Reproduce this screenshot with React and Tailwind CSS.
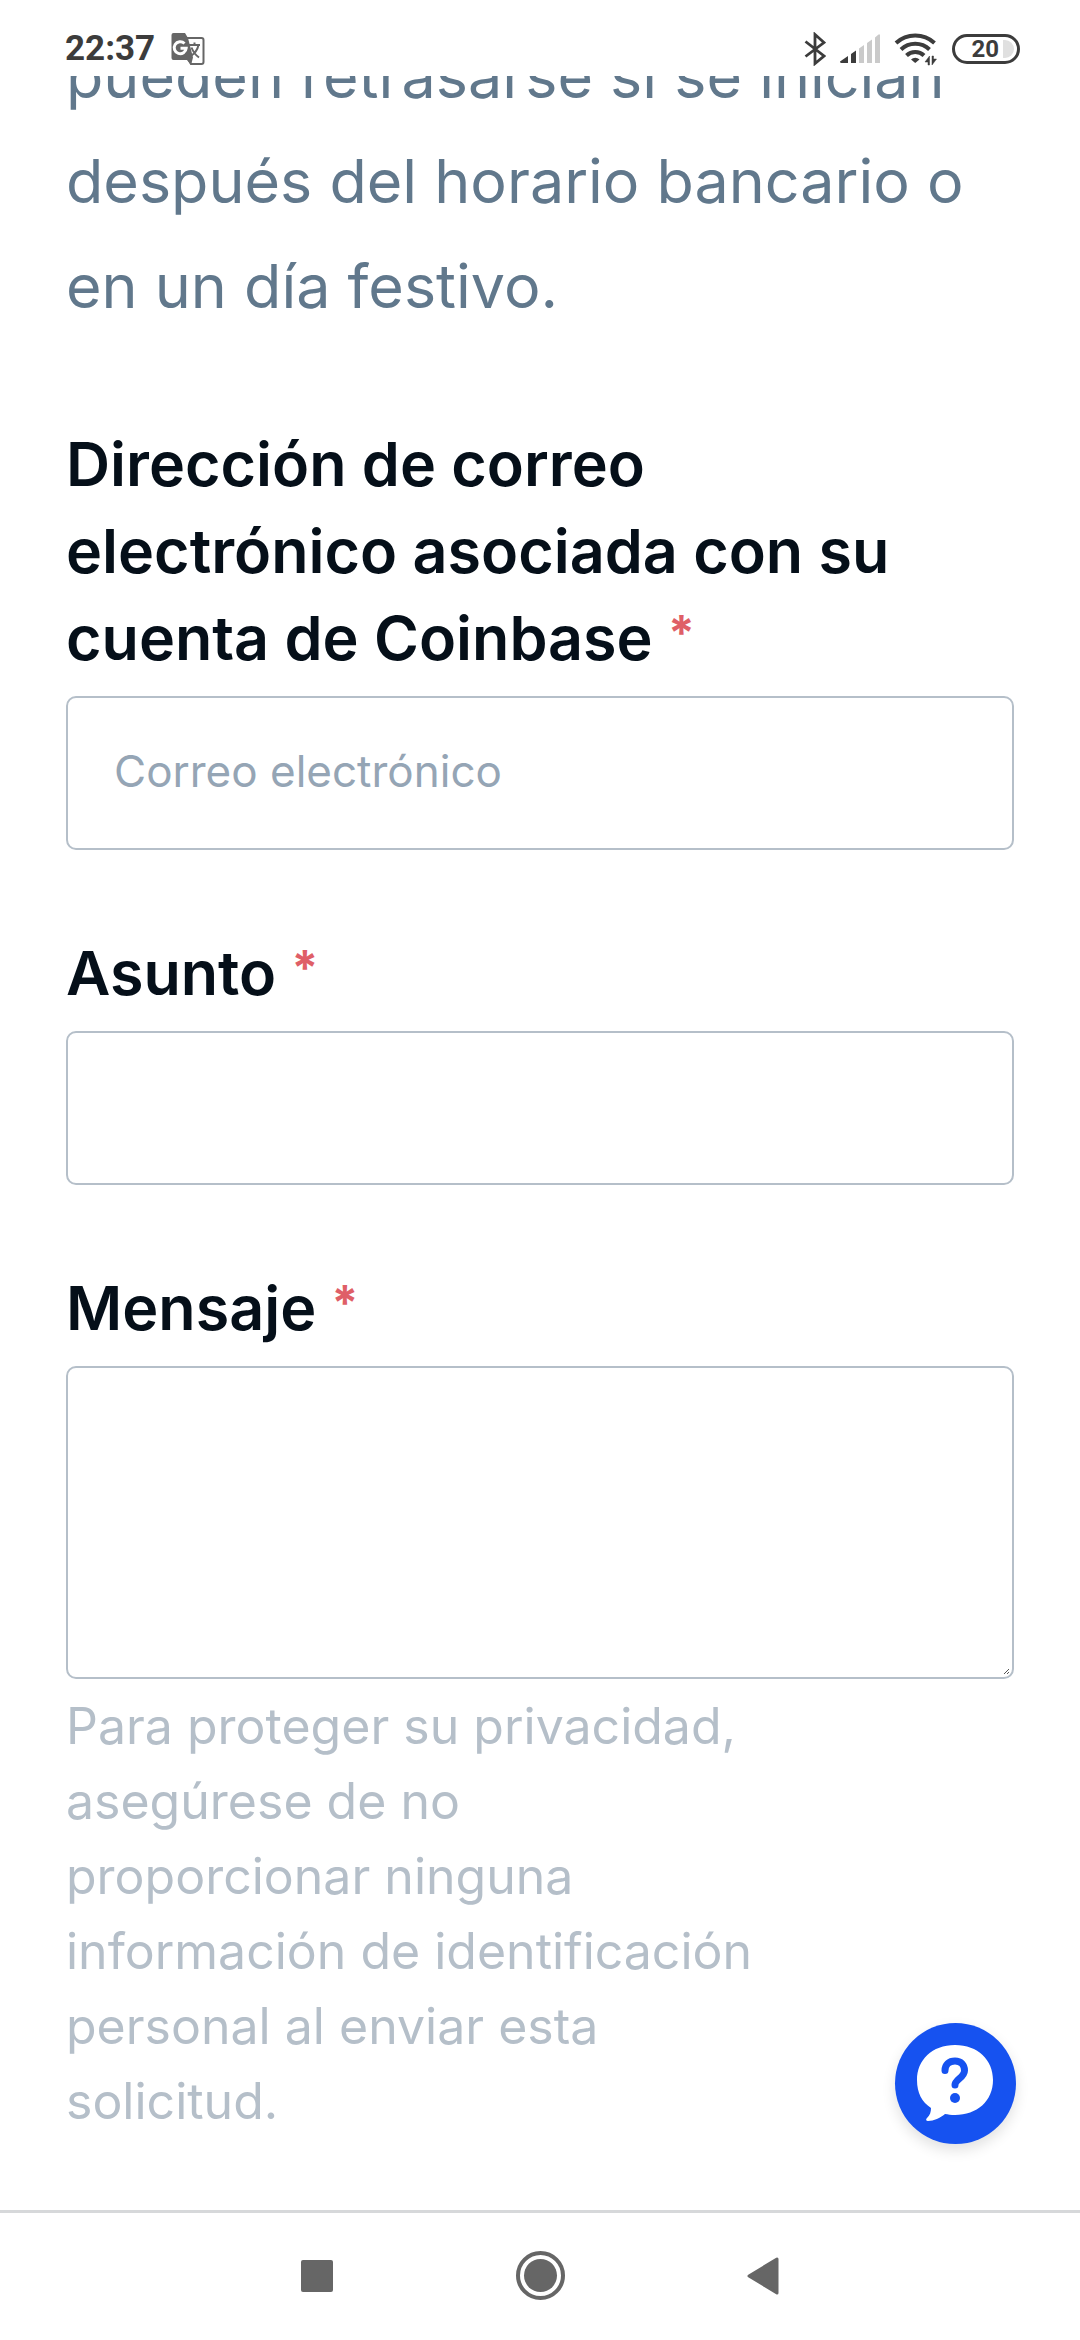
import React from 'react'

function TranslateIcon() {
  return (
    <svg viewBox="0 0 34 34" className="w-[34px] h-[34px]" aria-hidden="true">
      <path d="M14 6h16.500a2 2 0 0 1 2 2v22a2 2 0 0 1-2 2H20l-4-7z" fill="#fff" stroke="#666" strokeWidth="2" />
      <path d="M2.500 1H14l3 5 5 19.500L20 33l-4-5H2.500A2 2 0 0 1 .5 26V3a2 2 0 0 1 2-2z" fill="#666" />
      <path d="M13.500 11.500a6 6 0 1 0 1.700 4.700H9.500" fill="none" stroke="#fff" strokeWidth="3" />
      <path d="M18 13h11M23.500 10.500V13M27.500 13c-1 5-4 8.500-7.500 11M20.500 15.500c1.500 4 4 7.500 7.500 10" fill="none" stroke="#666" strokeWidth="2" />
    </svg>
  )
}

function BluetoothIcon() {
  return (
    <svg viewBox="0 0 22 34" className="w-[22px] h-[34px]" aria-hidden="true">
      <path d="M1.500 9.500 20 24 11 31.500V2.500l9 8L1.500 24.500" fill="none" stroke="#3c3c3c" strokeWidth="2.800" />
    </svg>
  )
}

function SignalIcon() {
  return (
    <svg viewBox="0 0 40 30" className="w-10 h-[30px]" aria-hidden="true">
      <path d="M0 27.500 8 22v7H1.500A1.500 1.500 0 0 1 0 27.500zM11 20l5-3.500V29h-5z" fill="#3c3c3c" />
      <path d="M19 14.500l5-3.500v18h-5zM27 9l5-3.500V29h-5zM35 3.500 38.500.5H40V29h-5z" fill="#cacaca" />
    </svg>
  )
}

function WifiIcon() {
  return (
    <svg viewBox="0 0 44 34" className="w-11 h-[34px]" aria-hidden="true">
      <g fill="none" stroke="#3c3c3c" strokeWidth="4">
        <path d="M2 11a28.500 28.500 0 0 1 38.500 0" />
        <path d="M7 17.500a20.500 20.500 0 0 1 28.500 0" />
        <path d="M12.500 23.500a12.500 12.500 0 0 1 17.500 0" />
      </g>
      <path d="M17 27.500a6 6 0 0 1 8.500 0L21.200 31z" fill="#3c3c3c" />
      <path d="M35.500 24v9h-1.500v-3h-3zM38 33v-9h1.500v3h3z" fill="#3c3c3c" stroke="#3c3c3c" strokeWidth="0.500" />
    </svg>
  )
}

function StatusBar() {
  return (
    <header className="flex h-[76px] shrink-0 items-center justify-between pt-[22px] pr-[60px] pl-[65px]">
      <div className="flex items-center gap-4">
        <span className="font-['Roboto',sans-serif] text-[35px] leading-10 font-bold text-[#3c3c3c]">22:37</span>
        <TranslateIcon />
      </div>
      <div className="flex items-center gap-3.5">
        <BluetoothIcon />
        <SignalIcon />
        <WifiIcon />
        <div className="flex h-[30px] w-[68px] items-center justify-end gap-1 rounded-full border-3 border-[#3c3c3c] pr-[3px]">
          <span className="font-['Roboto',sans-serif] text-2xl leading-6 font-bold text-[#3c3c3c]">20</span>
          <span className="h-[18px] w-[11px] rounded-r-full bg-[#e0e0e0]" />
        </div>
      </div>
    </header>
  )
}

function FieldLabel({ htmlFor, children }) {
  return (
    <label
      htmlFor={htmlFor}
      className="mb-3.5 block max-w-[860px] text-[61px] leading-[87px] font-semibold text-[#050f19]"
    >
      {children} <span className="align-[10px] text-5xl leading-none font-bold text-[#df5f67]">*</span>
    </label>
  )
}

const boxClass =
  'block w-full rounded-[10px] border-2 border-[#b5bfc9] bg-white px-[46px] text-[44px] text-[#050f19] outline-none placeholder:text-[#95a5b5]'

function ContactForm() {
  return (
    <form className="mt-[82px] flex flex-col gap-20">
      <div>
        <FieldLabel htmlFor="email">Dirección de correo electrónico asociada con su cuenta de Coinbase</FieldLabel>
        <input id="email" type="email" placeholder="Correo electrónico" className={`${boxClass} h-[154px] pb-1`} />
      </div>
      <div>
        <FieldLabel htmlFor="subject">Asunto</FieldLabel>
        <input id="subject" type="text" className={`${boxClass} h-[154px] pb-1`} />
      </div>
      <div>
        <FieldLabel htmlFor="message">Mensaje</FieldLabel>
        <div className="relative">
          <textarea id="message" className={`${boxClass} h-[313px] resize-none py-10`} />
          <svg viewBox="0 0 8 8" className="absolute right-1 bottom-1 h-2 w-2" aria-hidden="true">
            <path d="M2 7 7 2M5 7l2-2" stroke="#555" strokeWidth="1" />
          </svg>
        </div>
        <p className="mt-2.5 max-w-[695px] text-[50px] leading-[75px] text-[#b5bfc9]">
          Para proteger su privacidad, asegúrese de no proporcionar ninguna información de identificación personal al
          enviar esta solicitud.
        </p>
      </div>
    </form>
  )
}

function HelpButton() {
  return (
    <button
      type="button"
      aria-label="Ayuda"
      className="absolute right-16 bottom-[66px] h-[121px] w-[121px] rounded-full bg-[#1652f0] shadow-[0_6px_14px_rgba(0,0,0,0.12)]"
    >
      <svg viewBox="0 0 121 121" className="h-full w-full" aria-hidden="true">
        <path
          d="M60 22c23 0 38 15 38 35 0 21-16 35-38 35-4 0-7-.5-10-1-5 4-11 7-17 7-2 0-2.500-1.500-1-3 3-3 4-6 4-10C27 79 22 70 22 57c0-20 15-35 38-35z"
          fill="#fff"
        />
        <path d="M50 47.500c0-6 4-9.500 10-9.500s9.500 4 9.500 9.500c0 7-9.500 9-9.500 14.500" fill="none" stroke="#1652f0" strokeWidth="7" strokeLinecap="round" />
        <circle cx="60" cy="75" r="5" fill="#1652f0" />
      </svg>
    </button>
  )
}

function NavigationBar() {
  return (
    <nav className="flex h-[130px] shrink-0 items-center justify-center border-t-3 border-[#d6d8da] pb-0.5">
      <button type="button" aria-label="Recientes" className="flex w-[223px] justify-center">
        <span className="h-8 w-8 rounded-[2px] bg-[#666]" />
      </button>
      <button type="button" aria-label="Inicio" className="flex w-[223px] justify-center">
        <span className="h-[49px] w-[49px] rounded-full border-4 border-[#666] p-1">
          <span className="block h-full w-full rounded-full bg-[#666]" />
        </span>
      </button>
      <button type="button" aria-label="Atrás" className="flex w-[223px] justify-center">
        <svg viewBox="0 0 32 38" className="h-[38px] w-8" aria-hidden="true">
          <path d="M2 19 30 2v34z" fill="#666" stroke="#666" strokeWidth="3" strokeLinejoin="round" />
        </svg>
      </button>
    </nav>
  )
}

export default function App() {
  return (
    <div className="flex min-h-screen flex-col bg-white font-['Inter',sans-serif]">
      <StatusBar />
      <main className="relative flex-1 overflow-hidden px-[66px]">
        {/* page is scrolled, so the first line is cut off under the status bar */}
        <p className="-mt-[52px] text-[61px] leading-[105px] text-[#61788c]">
          pueden retrasarse si se inician después del horario bancario o en un día festivo.
        </p>
        <ContactForm />
        <HelpButton />
      </main>
      <NavigationBar />
    </div>
  )
}
